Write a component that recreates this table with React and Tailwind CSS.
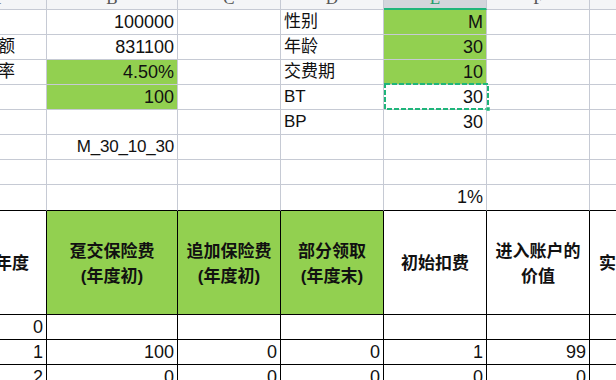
import clsx from "clsx";

const W = ["w-[103px]", "w-[131px]", "w-[103px]", "w-[103px]", "w-[103px]", "w-[103px]", "w-[103px]"];
const LETTERS = ["A", "B", "C", "D", "E", "F", "G"];

// upper block: [A, B, C, D, E, F, G]
const top = [
  ["保额", "100000", "", "性别", "M", "", ""],
  ["基本保额", "831100", "", "年龄", "30", "", ""],
  ["结算利率", "4.50%", "", "交费期", "10", "", ""],
  ["", "100", "", "BT", "30", "", ""],
  ["", "", "", "BP", "30", "", ""],
  ["", "M_30_10_30", "", "", "", "", ""],
  ["", "", "", "", "", "", ""],
  ["", "", "", "", "1%", "", ""],
];

const green = {
  0: [4],
  1: [4],
  2: [1, 4],
  3: [1],
};

const heads = [
  ["保单年度"],
  ["趸交保险费", "(年度初)"],
  ["追加保险费", "(年度初)"],
  ["部分领取", "(年度末)"],
  ["初始扣费"],
  ["进入账户的", "价值"],
  ["实际扣除额"],
];

const data = [
  ["0", "", "", "", "", "", ""],
  ["1", "100", "0", "0", "1", "99", ""],
  ["2", "0", "0", "0", "0", "0", ""],
];

const isNum = (s) => /^[0-9M_.%]/.test(s);

export default function App() {
  return (
    <div className="relative w-[616px] h-[380px] overflow-hidden bg-white text-[#111] font-['Liberation_Sans','Noto_Sans_CJK_SC',sans-serif]">
      <div className="ml-[-56px] w-[749px]">
        {/* column letters */}
        <div className="flex h-[10px]">
          {LETTERS.map((l, i) => (
            <div
              key={l}
              className={clsx(
                "shrink-0 overflow-hidden border-r border-[#c6cad4]",
                W[i],
                i === 4 ? "bg-[#d3d6dc] border-b-2 border-b-[#1fb57a]" : "bg-[#f4f5f7] border-b"
              )}
            >
              <div
                className={clsx(
                  "mt-[-11px] h-[20px] leading-[20px] text-center text-[17px] font-['Liberation_Serif',serif]",
                  i === 4 ? "text-[#1f9d6c]" : "text-[#555]"
                )}
              >
                {l}
              </div>
            </div>
          ))}
        </div>

        {/* upper grid */}
        {top.map((row, r) => (
          <div key={r} className={clsx("flex", r === 7 ? "h-[26px]" : "h-[25px]")}>
            {row.map((t, c) => (
              <div
                key={c}
                className={clsx(
                  "shrink-0 flex items-center border-r border-b border-[#c6cad4] whitespace-nowrap overflow-visible",
                  W[c],
                  r === 7 && "border-b-black",
                  green[r] && green[r].includes(c) && "bg-[#92d050]",
                  isNum(t) ? "justify-end pr-[3px]" : "justify-start pl-[3px] text-[17px]",
                  isNum(t) && (t.includes("_") ? "text-[17px] tracking-[-0.2px]" : "text-[18px]")
                )}
              >
                {t}
              </div>
            ))}
          </div>
        ))}

        {/* table header */}
        <div className="flex h-[104px]">
          {heads.map((lines, c) => (
            <div
              key={c}
              className={clsx(
                "shrink-0 flex flex-col items-center justify-center pt-[2px] border-r border-b border-black text-[17px] font-bold leading-[25px] whitespace-nowrap overflow-hidden",
                W[c],
                c >= 1 && c <= 3 && "bg-[#92d050]",
                c === 6 && "items-start pl-[9px]"
              )}
            >
              {lines.map((s) => (
                <div key={s}>{s}</div>
              ))}
            </div>
          ))}
        </div>

        {/* data rows */}
        {data.map((row, r) => (
          <div key={r} className="flex h-[25px]">
            {row.map((t, c) => (
              <div
                key={c}
                className={clsx(
                  "shrink-0 flex items-center justify-end pr-[3px] border-r border-b border-black text-[18px]",
                  W[c]
                )}
              >
                {t}
              </div>
            ))}
          </div>
        ))}
      </div>

      {/* copy selection around E4 */}
      <svg className="absolute left-[384px] top-[83px]" width="106" height="28">
        <rect x="1" y="1" width="103" height="25" fill="none" stroke="#1fb57a" strokeWidth="2" strokeDasharray="5 2" />
        <rect x="102" y="24" width="4" height="4" fill="#1fb57a" stroke="#fff" strokeWidth="0.5" />
      </svg>
    </div>
  );
}
